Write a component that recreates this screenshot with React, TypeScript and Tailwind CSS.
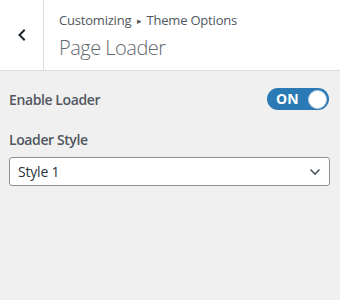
import React, { useState } from 'react';

const App: React.FC = () => {
  const [enabled, setEnabled] = useState(true);
  const [style, setStyle] = useState('Style 1');

  return (
    <div className="w-[340px] h-[300px] bg-[#f0f0f1] font-['Open_Sans','Noto_Sans',sans-serif] text-[#50575e]">
      <div className="flex h-[71px] bg-white border-b border-[#dcdcde]">
        <button className="w-[44px] flex items-center justify-center border-r border-[#dcdcde] text-[#1d2327]">
          <svg width="12" height="14" viewBox="0 0 12 14" fill="none">
            <path d="M8 2.5 L3.5 7 L8 11.5" stroke="currentColor" strokeWidth="2" strokeLinecap="square" />
          </svg>
        </button>
        <div className="flex flex-col pl-[15px] pt-[10px]">
          <div className="text-[13px] leading-[20px] tracking-[-0.2px] text-[#50575e]">
            Customizing <span className="text-[9px] align-[1px] mx-[2px]">▸</span> Theme Options
          </div>
          <div className="text-[20px] leading-[28px] tracking-[-0.5px] font-light text-[#646970] mt-[3px]">Page Loader</div>
        </div>
      </div>

      <div className="px-[9px] pt-[17px]">
        <div className="flex items-center justify-between">
          <span className="text-[14px] font-semibold tracking-[-0.4px]">Enable Loader</span>
          <button
            onClick={() => setEnabled(!enabled)}
            className={`w-[62px] h-[22px] rounded-full flex items-center justify-between pl-[9px] pr-[2px] mr-[2px] ${enabled ? 'bg-[#2b79b5]' : 'bg-[#8c8f94]'}`}
          >
            <span className="text-white text-[14px] font-bold leading-none">{enabled ? 'ON' : 'OFF'}</span>
            <span className="w-[19px] h-[19px] rounded-full bg-white border border-[#bcd3e6]" />
          </button>
        </div>

        <div className="mt-[19px] text-[14px] font-semibold tracking-[-0.4px]">Loader Style</div>
        <div className="relative mt-[7px] mr-[1px]">
          <select
            value={style}
            onChange={(e) => setStyle(e.target.value)}
            className="appearance-none w-full h-[29px] bg-white border border-[#8c8f94] rounded-[3px] pl-[8px] text-[14px] tracking-[-0.2px] text-[#2c3338] outline-none"
          >
            <option>Style 1</option>
            <option>Style 2</option>
            <option>Style 3</option>
          </select>
          <svg className="absolute right-[9px] top-[11px] pointer-events-none" width="12" height="8" viewBox="0 0 12 8" fill="none">
            <path d="M1.5 1.5 L6 6 L10.5 1.5" stroke="#50575e" strokeWidth="1.6" />
          </svg>
        </div>
      </div>
    </div>
  );
};

export default App;
